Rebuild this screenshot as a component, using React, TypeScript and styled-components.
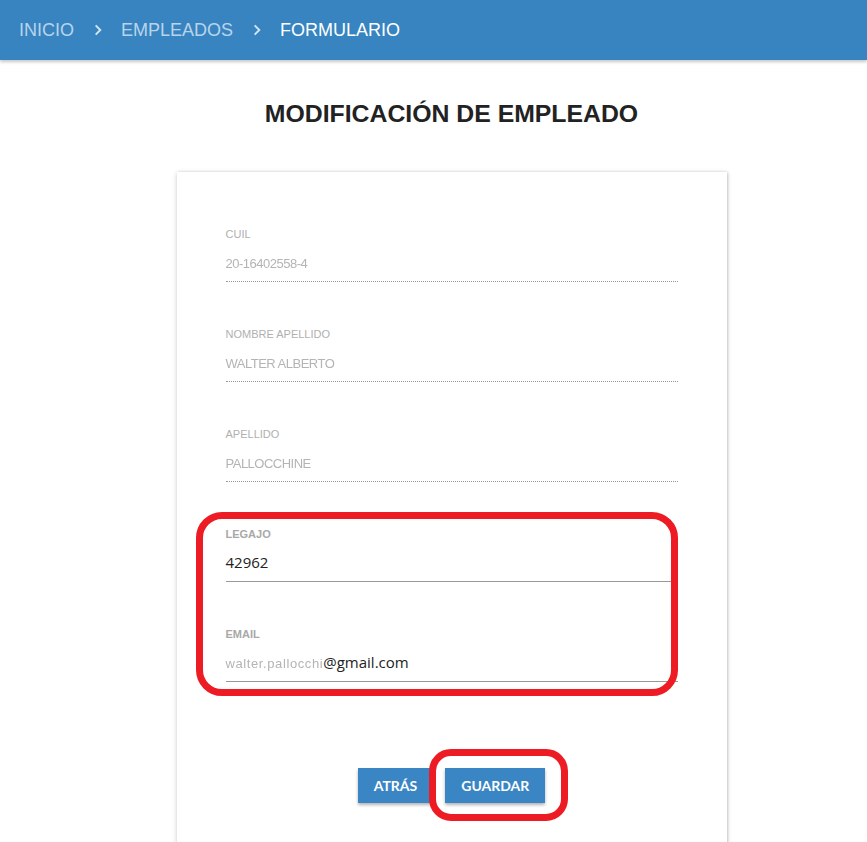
import React from "react"
import styled, { createGlobalStyle } from "styled-components"

const GlobalStyle = createGlobalStyle`
  html, body {
    margin: 0;
    padding: 0;
    background: #fff;
    font-family: "Liberation Sans", Arial, sans-serif;
    overflow: hidden;
  }
`

const Header = styled.header`
  height: 60px;
  background: #3784c1;
  box-shadow: 0 2px 3px rgba(0, 0, 0, 0.22);
  display: flex;
  align-items: center;
  padding: 0 19px;
  position: relative;
  z-index: 2;
`

const Crumb = styled.span<{ $active?: boolean }>`
  font-size: 18px;
  color: ${(p) => (p.$active ? "#ffffff" : "#b9d4ea")};
`

const Chevron = styled.svg`
  width: 14px;
  height: 14px;
  margin: 0 16px 0 17px;
  color: #d6e6f3;
`

const Main = styled.main`
  padding-left: 36px;
  display: flex;
  flex-direction: column;
  align-items: center;
`

const Title = styled.h1`
  margin: 40px 0 0;
  height: 72px;
  font-size: 24.8px;
  font-weight: bold;
  color: #222;
`

const Card = styled.section`
  width: 452px;
  min-height: 700px;
  padding: 56px 49px 0;
  background: #fff;
  box-shadow: 0 1px 5px rgba(0, 0, 0, 0.2), 1px 0 2px rgba(0, 0, 0, 0.12);
`

const Field = styled.div<{ $last?: boolean }>`
  display: flex;
  flex-direction: column;
  margin-bottom: ${(p) => (p.$last ? 0 : 46)}px;
`

const Label = styled.label<{ $disabled?: boolean }>`
  font-size: 11px;
  line-height: 12px;
  text-transform: uppercase;
  color: ${(p) => (p.$disabled ? "#b0b0b0" : "#a8a8a8")};
  font-weight: ${(p) => (p.$disabled ? "normal" : "bold")};
`

const Value = styled.div<{ $disabled?: boolean }>`
  margin-top: 12px;
  height: 29px;
  font-family: "Open Sans", sans-serif;
  font-size: 15px;
  line-height: 20px;
  color: #222;
  border-bottom: 1px ${(p) => (p.$disabled ? "dotted #999" : "solid #999")};
`

const Hidden = styled.span<{ $wide?: boolean }>`
  color: #b4b4b4;
  font-family: "Liberation Sans Narrow", "Liberation Sans", sans-serif;
  font-size: 13px;
  letter-spacing: ${(p) => (p.$wide ? "0.6px" : "-0.5px")};
  filter: blur(0.7px);
`

const Group = styled.div`
  position: relative;
`

const Highlight = styled.div<{ $radius: number }>`
  position: absolute;
  border: 7px solid #ed1c24;
  border-radius: ${(p) => p.$radius}px;
  pointer-events: none;
`

const Actions = styled.div`
  display: flex;
  justify-content: center;
  gap: 12px;
  margin-top: 86px;
`

const Button = styled.button`
  height: 35px;
  padding: 0 16px;
  border: none;
  border-radius: 0;
  background: #3a86c4;
  color: #fff;
  font-family: Lato, sans-serif;
  font-weight: bold;
  font-size: 14px;
  box-shadow: 0 2px 3px rgba(0, 0, 0, 0.3);
  cursor: pointer;
`

const ArrowRight = () => (
  <Chevron viewBox="0 0 24 24" fill="none" stroke="currentColor" strokeWidth="3.2">
    <path d="M8 4l8 8-8 8" />
  </Chevron>
)

export default function App() {
  return (
    <>
      <GlobalStyle />
      <Header>
        <Crumb>INICIO</Crumb>
        <ArrowRight />
        <Crumb>EMPLEADOS</Crumb>
        <ArrowRight />
        <Crumb $active>FORMULARIO</Crumb>
      </Header>
      <Main>
        <Title>MODIFICACIÓN DE EMPLEADO</Title>
        <Card>
          <Field>
            <Label $disabled>Cuil</Label>
            <Value $disabled>
              <Hidden>20-16402558-4</Hidden>
            </Value>
          </Field>
          <Field>
            <Label $disabled>Nombre Apellido</Label>
            <Value $disabled>
              <Hidden>WALTER ALBERTO</Hidden>
            </Value>
          </Field>
          <Field>
            <Label $disabled>Apellido</Label>
            <Value $disabled>
              <Hidden>PALLOCCHINE</Hidden>
            </Value>
          </Field>
          <Group>
            <Field>
              <Label>Legajo</Label>
              <Value>42962</Value>
            </Field>
            <Field $last>
              <Label>Email</Label>
              <Value>
                <Hidden $wide>walter.pallocchi</Hidden>@gmail.com
              </Value>
            </Field>
            <Highlight $radius={26} style={{ left: -30, right: 0, top: -16, bottom: -14 }} />
          </Group>
          <Actions>
            <Button>ATRÁS</Button>
            <Group>
              <Button>GUARDAR</Button>
              <Highlight $radius={22} style={{ left: -16, right: -23, top: -19, bottom: -18 }} />
            </Group>
          </Actions>
        </Card>
      </Main>
    </>
  )
}
